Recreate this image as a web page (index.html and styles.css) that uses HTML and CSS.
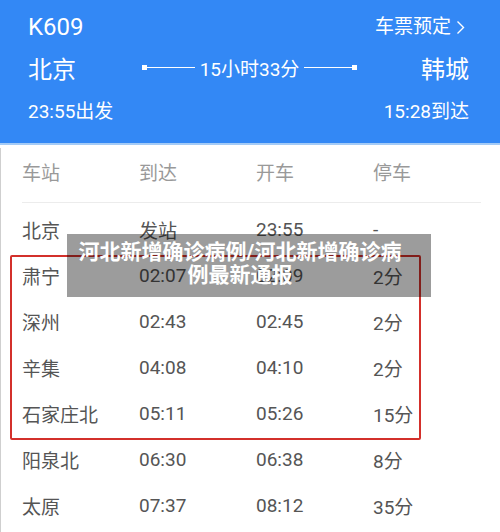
FILE: index.html
```html
<!DOCTYPE html>
<html lang="zh-CN">
<head>
    <meta charset="UTF-8">
    <meta name="viewport" content="width=device-width, initial-scale=1.0">
    <title>K609 时刻表</title>
    <link rel="stylesheet" href="styles.css">
</head>
<body>
    <header class="train">
        <div class="train-row">
            <span class="train-no">K609</span>
            <span class="book">车票预定 <svg class="chev" width="9" height="15" viewBox="0 0 9 15"><path d="M1.5 1.5 L7.5 7.5 L1.5 13.5" fill="none" stroke="#ffffff" stroke-width="1.4"/></svg></span>
        </div>
        <div class="train-row route">
            <span class="city">北京</span>
            <div class="duration">
                <i class="dot"></i><i class="line"></i>
                <span>15小时33分</span>
                <i class="line"></i><i class="dot"></i>
            </div>
            <span class="city">韩城</span>
        </div>
        <div class="train-row times">
            <span>23:55出发</span>
            <span>15:28到达</span>
        </div>
    </header>
    <div class="strip"></div>

    <div class="schedule">
        <div class="head">
            <span>车站</span><span>到达</span><span>开车</span><span>停车</span>
        </div>
        <div class="rows">
            <div class="row"><span>北京</span><span>发站</span><span>23:55</span><span>-</span></div>
            <div class="row"><span>肃宁</span><span>02:07</span><span>02:09</span><span>2分</span></div>
            <div class="row"><span>深州</span><span>02:43</span><span>02:45</span><span>2分</span></div>
            <div class="row"><span>辛集</span><span>04:08</span><span>04:10</span><span>2分</span></div>
            <div class="row"><span>石家庄北</span><span>05:11</span><span>05:26</span><span>15分</span></div>
            <div class="row"><span>阳泉北</span><span>06:30</span><span>06:38</span><span>8分</span></div>
            <div class="row"><span>太原</span><span>07:37</span><span>08:12</span><span>35分</span></div>
            <!-- 红框标注 -->
            <div class="mark"></div>
        </div>
    </div>

    <div class="caption">河北新增确诊病例/河北新增确诊病例最新通报</div>
</body>
</html>
```

FILE: styles.css
```css
/* 整体 */
body {
    margin: 0;
    background-color: #ffffff;
    font-family: Roboto, "Noto Sans CJK SC", sans-serif;
    overflow: hidden;
    position: relative;
    height: 532px;
}

/* 蓝色车次头部 */
.train {
    background-color: #3388f5;
    color: #ffffff;
    height: 143px;
    padding: 0 31px 0 28px;
    box-sizing: border-box;
}

.train-row {
    display: flex;
    align-items: center;
    justify-content: space-between;
}

.train-no {
    font-size: 24px;
    line-height: 30px;
    padding-top: 12px;
}

.book {
    display: flex;
    align-items: center;
    font-size: 19px;
    line-height: 30px;
    padding-top: 12px;
    margin-right: 4px;
}

.chev {
    margin-left: 5px;
}

.route {
    height: 38px;
    margin-top: 6px;
}

.city {
    font-size: 24px;
}

.duration {
    flex: 1;
    display: flex;
    align-items: center;
    padding: 0 64px 0 66px;
    font-size: 19px;
}

.duration span {
    margin: 0 5px;
}

.duration .line {
    flex: 1;
    height: 1px;
    background-color: #ffffff;
}

.duration .dot {
    width: 5px;
    height: 5px;
    background-color: #ffffff;
}

.times {
    font-size: 19px;
    margin-top: 10px;
}

.strip {
    height: 2px;
    background-color: #a4cbf6;
}

/* 时刻表 */
.schedule {
    border-left: 1px solid #cfcfcf;
    height: 387px;
}

.head,
.row {
    display: grid;
    grid-template-columns: 117px 117px 117px 117px;
    height: 46px;
    align-items: center;
    font-size: 19px;
}

.head {
    color: #999999;
    margin: 3px 19px 0 21px;
    padding-bottom: 8px;
    border-bottom: 1px solid #ececec;
}

.rows {
    position: relative;
    padding: 3px 0 0 21px;
}

.row {
    color: #555555;
}

.mark {
    position: absolute;
    left: 9px;
    top: 52px;
    width: 411px;
    height: 185px;
    border: 2px solid #d3302b;
    border-radius: 2px;
    box-sizing: border-box;
}

/* 标题遮罩 */
.caption {
    position: absolute;
    left: 67px;
    top: 234px;
    width: 364px;
    height: 63px;
    box-sizing: border-box;
    padding: 7px 27px 0 9px;
    background-color: rgba(0, 0, 0, 0.39);
    color: #ffffff;
    font-size: 21px;
    font-weight: bold;
    line-height: 23px;
    text-align: center;
}
```
